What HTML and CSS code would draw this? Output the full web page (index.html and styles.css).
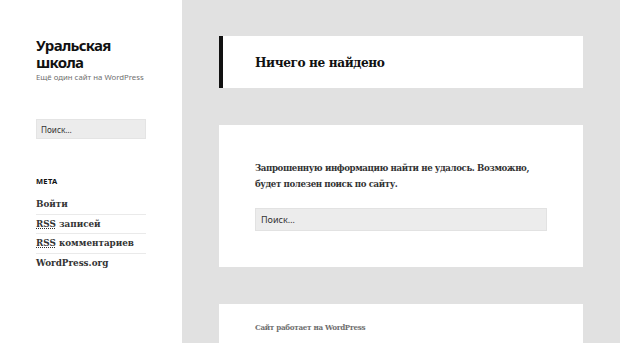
FILE: index.html
```html
<!DOCTYPE html>
<html lang="ru">
<head>
<meta charset="utf-8">
<link rel="stylesheet" href="styles.css">
</head>
<body>
<div class="page">
  <aside class="sidebar">
    <div class="site-title">Уральская школа</div>
    <div class="site-desc">Ещё один сайт на WordPress</div>
    <div class="side-search">Поиск…</div>
    <div class="widget-title">МЕТА</div>
    <ul class="meta">
      <li>Войти</li>
      <li><abbr>RSS</abbr> записей</li>
      <li><abbr>RSS</abbr> комментариев</li>
      <li>WordPress.org</li>
    </ul>
  </aside>
  <main class="main">
    <header class="page-header"><h1>Ничего не найдено</h1></header>
    <section class="content">
      <p>Запрошенную информацию найти не удалось. Возможно, будет полезен поиск по сайту.</p>
      <div class="main-search">Поиск…</div>
    </section>
    <footer class="footer">Сайт работает на WordPress</footer>
  </main>
</div>
</body>
</html>
```
FILE: styles.css
```css
html, body { margin: 0; padding: 0; }
body { background: #e1e1e1; width: 620px; height: 343px; overflow: hidden; }
.page { display: flex; align-items: stretch; height: 343px; overflow: hidden; }
.sidebar {
  width: 110px; background: #fff; padding: 37px 36px 0 36px;
  font-family: "Noto Sans", sans-serif; color: #333;
}
.site-title { font-weight: 700; font-size: 15px; line-height: 16.5px; color: #111; letter-spacing: -0.7px; width: 90px; }
.site-desc { font-size: 7.8px; color: #707070; margin-top: 1px; line-height: 12px; white-space: nowrap; }
.side-search {
  margin-top: 36px; height: 20px; box-sizing: border-box; background: #ececec;
  border: 1px solid #e4e4e4; font-size: 8.2px; color: #333; padding: 4px 4px; line-height: 11px;
}
.widget-title { margin-top: 37px; font-size: 7.5px; line-height: 10px; font-weight: 700; letter-spacing: 0.3px; color: #111; }
.meta { list-style: none; margin: 12px 0 0; padding: 0; font-family: "DejaVu Serif", serif; font-weight: 700; font-size: 8.8px; color: #333; }
.meta li { line-height: 12px; padding: 3px 0 3.5px; border-bottom: 1px solid #eaeaea; }
.meta li:first-child { padding-top: 0; }
.meta li:last-child { border-bottom: 0; }
.meta abbr { text-decoration: underline dotted; }
.main { flex: 1; padding: 36px 37px 0 37px; font-family: "DejaVu Serif", serif; font-stretch: condensed; color: #333; }
.page-header { background: #fff; border-left: 4px solid #111; height: 52px; box-sizing: border-box; padding: 0 32px; display: flex; align-items: center; }
.page-header h1 { margin: 0; font-size: 13.5px; font-weight: 700; color: #111; letter-spacing: -0.4px; }
.content { background: #fff; margin-top: 37px; height: 142px; box-sizing: border-box; padding: 35px 36px 0; }
.content p { margin: 0; font-size: 9.6px; line-height: 16px; font-weight: 700; letter-spacing: -0.4px; width: 285px; }
.main-search { margin-top: 16px; width: 292px; height: 23px; box-sizing: border-box; background: #ececec; border: 1px solid #e2e2e2; font-family: "Noto Sans", sans-serif; font-stretch: normal; font-size: 9px; padding: 5px 5px; line-height: 12px; color: #333; }
.footer { background: #fff; margin-top: 37px; height: 39px; box-sizing: border-box; padding: 18px 36px 0; font-size: 8px; font-weight: 700; color: #707070; letter-spacing: -0.3px; }
```
